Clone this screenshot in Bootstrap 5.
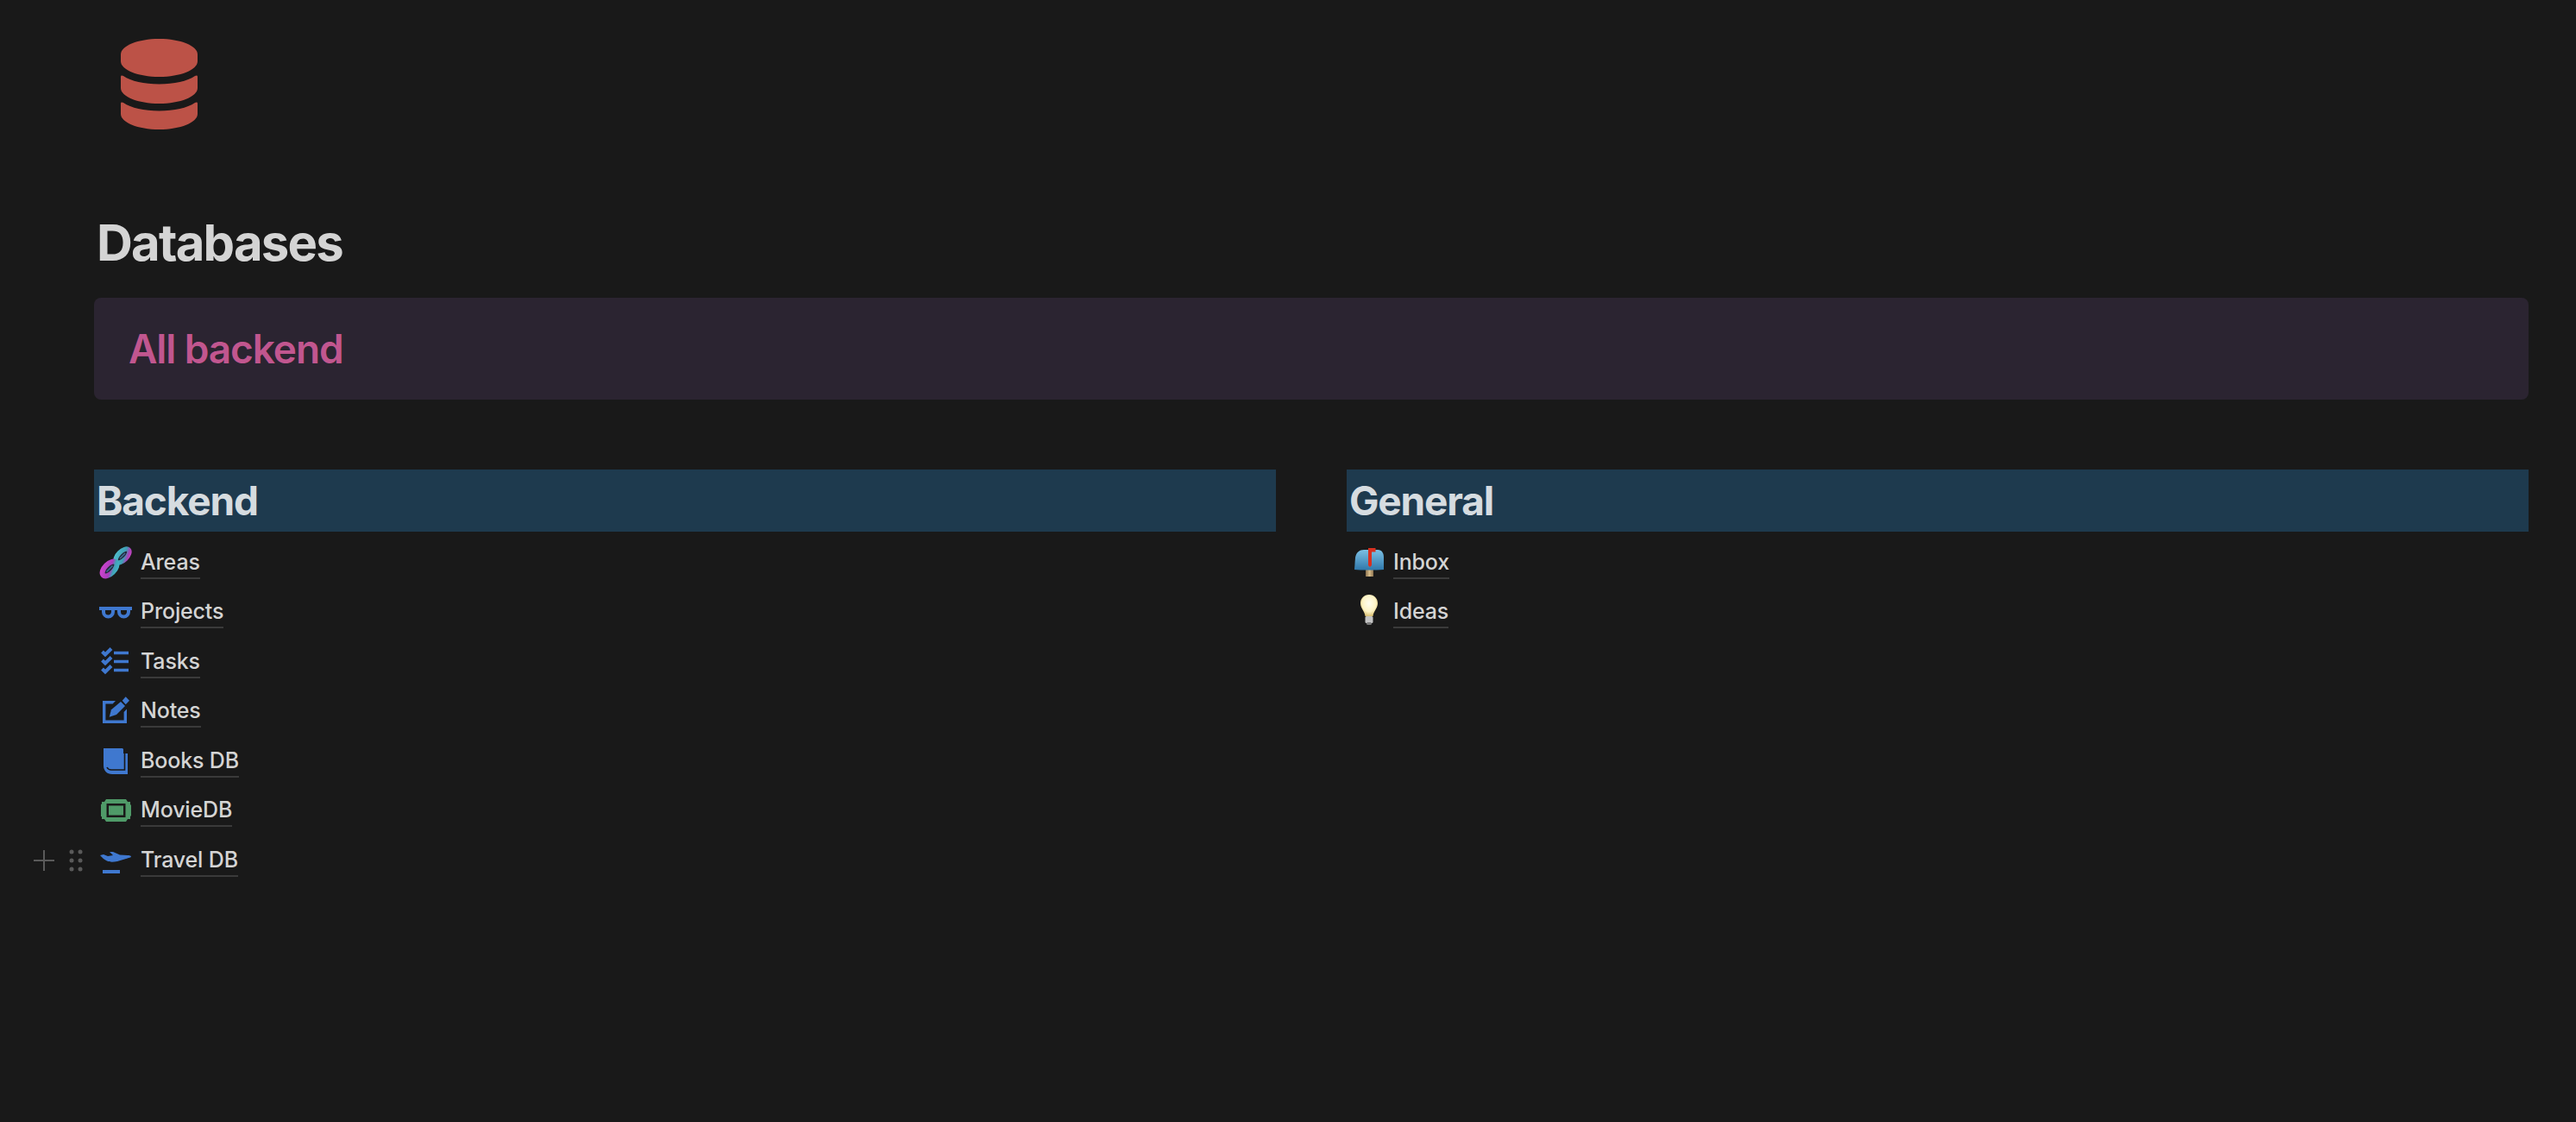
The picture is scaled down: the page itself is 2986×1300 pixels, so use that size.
<!doctype html>
<html lang="en">
<head>
<meta charset="utf-8">
<title>Databases</title>
<link href="https://cdn.jsdelivr.net/npm/bootstrap@5.3.0/dist/css/bootstrap.min.css" rel="stylesheet">
<style>
html,body{background:#191919;}
body{font-family:"Inter","Liberation Sans",sans-serif;color:#d4d4d4;min-height:1300px;overflow:hidden;}
.sheet{padding:45px 55px 0 109px;}
.page-ico{display:block;width:89px;height:105px;margin-left:31px;color:#bc5247;}
.page-title{font-family:inherit;font-size:58px;font-weight:750;line-height:70px;letter-spacing:-1.8px;color:#d4d4d4;margin:96px 0 0 3px;height:69px;}
.banner{margin-top:30px;height:118px;background:#2b2431;border-radius:8px;padding-left:41px;display:flex;align-items:center;}
.banner-text{font-size:46px;font-weight:620;letter-spacing:-1.1px;color:#c1568f;margin-left:-1px;}
.cols{margin-top:81px;gap:82px;}
.column-pane{flex:1 1 0;min-width:0;}
.section-bar{height:72px;line-height:72px;background:#1e3a4e;color:#d6dce0;font-size:46px;font-weight:650;letter-spacing:-1.15px;padding-left:3px;margin:0 0 6px;font-family:inherit;}
.entry{height:57.5px;display:flex;align-items:center;position:relative;padding-left:4px;}
.entry-ico{width:44px;height:44px;flex:none;margin-top:-2px;}
.entry-label{margin-left:6px;font-size:25px;font-weight:500;line-height:31px;color:#d4d4d4;border-bottom:2px solid #3a3a3a;padding-bottom:2px;margin-top:5px;letter-spacing:-.15px;}
.handles{position:absolute;left:-70px;top:13px;width:60px;height:34px;}
</style>
</head>
<body>
<div class="sheet">
  <svg class="page-ico" viewBox="0 0 89 105" fill="currentColor" aria-hidden="true">
    <path d="M44.500 0C20 0 0 8 0 18v8c0 10 20 18 44.500 18S89 36 89 26v-8C89 8 69 0 44.500 0z"/>
    <path d="M3 43c9 6 24 9.500 41.500 9.500S77 49 86 43c2-1 3-.5 3 1v13c0 10-20 18-44.500 18S0 67 0 57V44c0-1.500 1-2 3-1z"/>
    <path d="M3 74c9 6 24 9.500 41.500 9.500S77 80 86 74c2-1 3-.5 3 1v12c0 10-20 18-44.500 18S0 97 0 87V75c0-1.500 1-2 3-1z"/>
  </svg>
  <h1 class="page-title">Databases</h1>
  <div class="banner"><span class="banner-text">All backend</span></div>
  <div class="cols d-flex">
    <div class="column-pane">
      <h2 class="section-bar">Backend</h2>
      <div class="entry">
        <svg class="entry-ico" viewBox="0 0 44 44" aria-hidden="true">
          <defs>
            <linearGradient id="dnaA" x1="0" y1="0" x2="1" y2="1"><stop offset="0" stop-color="#cf45cf"/><stop offset=".55" stop-color="#a83dbc"/><stop offset=".75" stop-color="#3fa4b8"/><stop offset="1" stop-color="#46b4c6"/></linearGradient>
            <linearGradient id="dnaB" x1="0" y1="0" x2="1" y2="1"><stop offset="0" stop-color="#4fbccb"/><stop offset=".6" stop-color="#3f9fb5"/><stop offset=".85" stop-color="#a842b8"/><stop offset="1" stop-color="#c746c4"/></linearGradient>
          </defs>
          <ellipse cx="29" cy="16" rx="10" ry="5" transform="rotate(-45 29 16)" fill="#23283a" stroke="url(#dnaB)" stroke-width="5.500"/>
          <ellipse cx="14" cy="31" rx="10.500" ry="5.500" transform="rotate(-45 14 31)" fill="#23283a" stroke="url(#dnaA)" stroke-width="6"/>
          <path d="M10.500 34.500l7-7M26 19l6-6" stroke="#3f6f96" stroke-width="1.500"/>
        </svg>
        <span class="entry-label">Areas</span>
      </div>
      <div class="entry">
        <svg class="entry-ico" viewBox="0 0 44 44" fill="none" stroke="#3f78cf" aria-hidden="true">
          <path d="M2 20h38" stroke-width="4"/>
          <path d="M7 21v3a5.500 5.500 0 0 0 11 0v-3M25 21v3a5.500 5.500 0 0 0 11 0v-3" stroke-width="4"/>
        </svg>
        <span class="entry-label">Projects</span>
      </div>
      <div class="entry">
        <svg class="entry-ico" viewBox="0 0 44 44" fill="none" stroke="#3f78cf" aria-hidden="true">
          <path d="M5.500 12l3.500 3.500 7-7M5.500 22l3.500 3.500 7-7M5.500 32l3.500 3.500 7-7" stroke-width="4"/>
          <path d="M19 13.500h17M19 23.500h17M19 33.500h17" stroke-width="3.700"/>
        </svg>
        <span class="entry-label">Tasks</span>
      </div>
      <div class="entry">
        <svg class="entry-ico" viewBox="0 0 44 44" fill="#3f78cf" aria-hidden="true">
          <path d="M6 12h15l-3.400 3.400H9.400v19.200h21.200V25l3.400-3.400V38H6z"/>
          <path d="M13.700 30.700L16 22.300 27 13l5 5-10 10z"/>
          <path d="M28.700 11.700l4-4.400 4.300 4.400-4.300 4.600z"/>
        </svg>
        <span class="entry-label">Notes</span>
      </div>
      <div class="entry">
        <svg class="entry-ico" viewBox="0 0 44 44" aria-hidden="true">
          <path d="M7 9h22l1 1v5h5v24H17C11 39 7 35 7 29z" fill="#3f78cf"/>
          <path d="M11 31c1 2 3 3 5 3h15.500V14" fill="none" stroke="#191919" stroke-width="1.600"/>
        </svg>
        <span class="entry-label">Books DB</span>
      </div>
      <div class="entry">
        <svg class="entry-ico" viewBox="0 0 44 44" aria-hidden="true">
          <path d="M10 11h23l2 3h3v3l1 1v12l-1 1v3h-3l-2 3H10l-2-3H5v-3l-1 0V17l1-.5V14h3z" fill="#4f9a68"/>
          <rect x="10.500" y="16" width="22" height="16" fill="#191919"/>
          <rect x="13" y="18.500" width="17" height="11" fill="#4f9a68"/>
        </svg>
        <span class="entry-label">MovieDB</span>
      </div>
      <div class="entry">
        <svg class="handles" viewBox="0 0 60 34" aria-hidden="true">
          <path d="M0 17h24M12 5v24" stroke="#5a5a5a" stroke-width="2" fill="none"/>
          <g fill="#5a5a5a"><circle cx="44" cy="7" r="2.500"/><circle cx="54" cy="7" r="2.500"/><circle cx="44" cy="17" r="2.500"/><circle cx="54" cy="17" r="2.500"/><circle cx="44" cy="27" r="2.500"/><circle cx="54" cy="27" r="2.500"/></g>
        </svg>
        <svg class="entry-ico" viewBox="0 0 44 44" fill="#3f78cf" aria-hidden="true">
          <path d="M3 18l4-1 5 2 6-1-4-4h4l8 3.500 9 .5c2 0 4 .500 4 1.500 0 1-3 1.500-6 2.500l-10 3c-5 1-9 1-12-.5-3-1.500-6-4-8-6.500z"/>
          <rect x="6" y="35" width="20" height="4"/>
        </svg>
        <span class="entry-label">Travel DB</span>
      </div>
    </div>
    <div class="column-pane">
      <h2 class="section-bar">General</h2>
      <div class="entry">
        <svg class="entry-ico" viewBox="0 0 44 44" aria-hidden="true">
          <defs>
            <linearGradient id="boxG" x1="0" y1="0" x2="0" y2="1"><stop offset="0" stop-color="#7cc0e4"/><stop offset="1" stop-color="#2f78ab"/></linearGradient>
            <linearGradient id="postG" x1="0" y1="0" x2="1" y2="0"><stop offset="0" stop-color="#8c7350"/><stop offset=".5" stop-color="#d8bd8a"/><stop offset="1" stop-color="#8c7350"/></linearGradient>
          </defs>
          <rect x="18" y="32" width="9" height="8" fill="url(#postG)"/>
          <path d="M5 32l1-14c1-6 5-9 10-9h16c5 0 7 4 7 9v14l-8 .5H12z" fill="url(#boxG)"/>
          <path d="M21 7h8.500v4.500H25V27l-2 2-2-2z" fill="#d8301f"/>
        </svg>
        <span class="entry-label">Inbox</span>
      </div>
      <div class="entry">
        <svg class="entry-ico" viewBox="0 0 44 44" aria-hidden="true">
          <defs>
            <radialGradient id="bulbG" cx=".5" cy=".4" r=".6"><stop offset="0" stop-color="#fffdf0"/><stop offset=".65" stop-color="#fdf3c4"/><stop offset="1" stop-color="#d9bf72"/></radialGradient>
          </defs>
          <path d="M22 4c6 0 10 4.500 10 10 0 6-5 9-5.500 15h-9C17 23 12 20 12 14 12 8.500 16 4 22 4z" fill="url(#bulbG)"/>
          <rect x="17.500" y="29" width="9" height="8" rx="1.500" fill="#c4c4c4"/>
          <rect x="19" y="36" width="6" height="3" rx="1.500" fill="#7a7a7a"/>
        </svg>
        <span class="entry-label">Ideas</span>
      </div>
    </div>
  </div>
</div>
<script src="https://cdn.jsdelivr.net/npm/bootstrap@5.3.0/dist/js/bootstrap.bundle.min.js"></script>
</body>
</html>
